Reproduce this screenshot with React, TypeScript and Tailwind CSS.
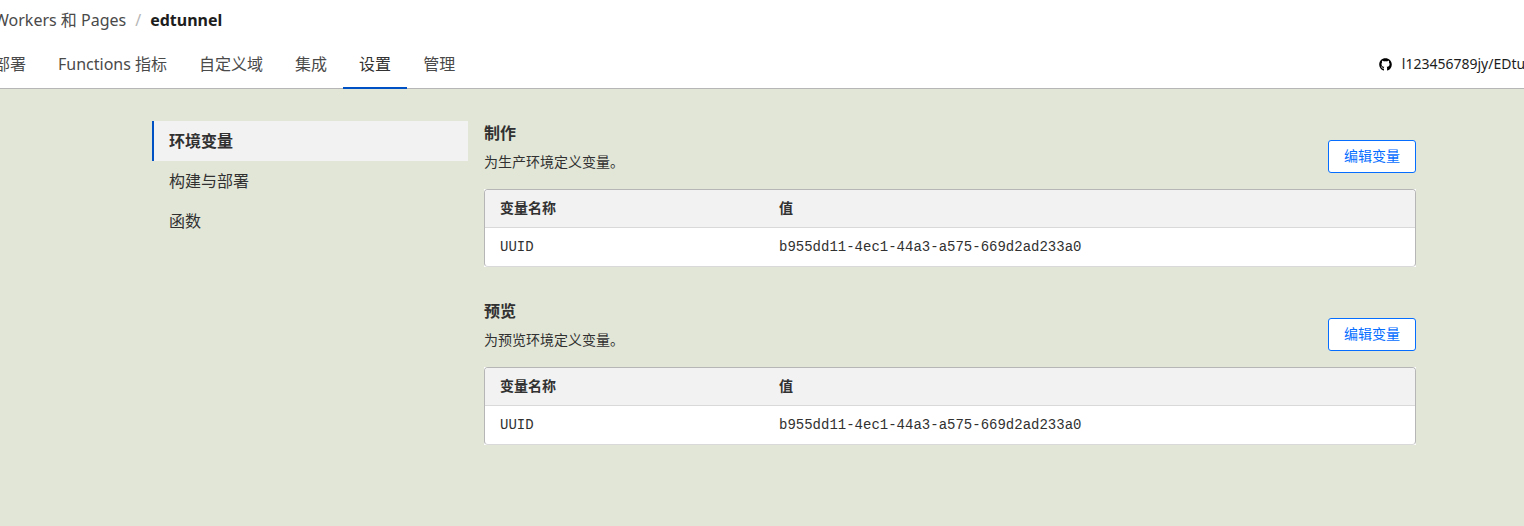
import { FaGithub } from "react-icons/fa";

type Variable = {
  name: string;
  value: string;
};

type Environment = {
  id: string;
  title: string;
  description: string;
  variables: Variable[];
};

const tabs = [
  { id: "deployments", label: "部署" },
  { id: "metrics", label: "Functions 指标" },
  { id: "domains", label: "自定义域" },
  { id: "integrations", label: "集成" },
  { id: "settings", label: "设置" },
  { id: "manage", label: "管理" },
];

const sections = [
  { id: "env", label: "环境变量" },
  { id: "builds", label: "构建与部署" },
  { id: "functions", label: "函数" },
];

const environments: Environment[] = [
  {
    id: "production",
    title: "制作",
    description: "为生产环境定义变量。",
    variables: [{ name: "UUID", value: "b955dd11-4ec1-44a3-a575-669d2ad233a0" }],
  },
  {
    id: "preview",
    title: "预览",
    description: "为预览环境定义变量。",
    variables: [{ name: "UUID", value: "b955dd11-4ec1-44a3-a575-669d2ad233a0" }],
  },
];

function Header() {
  return (
    <header className="border-b border-[#b6b6b6] bg-white px-4">
      <nav aria-label="breadcrumb" className="flex h-10 items-center gap-[9px]">
        <a href="#pages" className="text-[#4a4a4a]">
          Workers 和 Pages
        </a>
        <span className="text-[#b6b6b6]">/</span>
        <span className="font-bold text-[#1d1d1d]">edtunnel</span>
      </nav>
      <div className="flex items-center justify-between">
        <nav className="-mx-4 -mb-px flex">
          {tabs.map((tab) => {
            const isActive = tab.id === "settings";
            return (
              <a
                key={tab.id}
                href={`#${tab.id}`}
                aria-current={isActive ? "page" : undefined}
                className={`flex h-[49px] items-center border-b-2 px-4 whitespace-nowrap ${
                  isActive
                    ? "border-[#0051c3] text-[#313131]"
                    : "border-transparent text-[#4a4a4a]"
                }`}
              >
                {tab.label}
              </a>
            );
          })}
        </nav>
        <a
          href="#repository"
          className="mr-5 flex items-center gap-2.5 text-sm text-[#1d1d1d]"
        >
          <FaGithub size={13} className="text-black" />
          l123456789jy/EDtunnel
        </a>
      </div>
    </header>
  );
}

function Sidebar() {
  return (
    <nav className="w-1/4 shrink-0">
      {sections.map((section) => (
        <a
          key={section.id}
          href={`#${section.id}`}
          className={`flex h-10 items-center border-l-2 px-[15px] ${
            section.id === "env"
              ? "border-[#0051c3] bg-[#f2f2f2] font-bold"
              : "border-transparent"
          }`}
        >
          {section.label}
        </a>
      ))}
    </nav>
  );
}

function EnvironmentSection({ environment }: { environment: Environment }) {
  return (
    <section aria-labelledby={environment.id}>
      <div className="flex items-end justify-between">
        <div className="pb-0.5">
          <h2 id={environment.id} className="leading-6 font-bold">
            {environment.title}
          </h2>
          <p className="mt-2 text-sm leading-[18px]">
            {environment.description}
          </p>
        </div>
        <button
          type="button"
          className="h-[33px] rounded-[3px] border border-[#056dff] bg-white px-[15px] pb-0.5 text-sm text-[#056dff]"
        >
          编辑变量
        </button>
      </div>
      <div className="mt-4 bg-white">
        <div className="overflow-hidden rounded-[4px] border border-[#b6b6b6] border-b-[#d9d9d9]">
          <table className="w-full table-fixed text-left text-sm">
            <thead className="bg-[#f2f2f2]">
              <tr className="h-[37px] border-b border-[#d9d9d9]">
                <th className="w-[30%] px-[15px] font-bold">变量名称</th>
                <th className="px-[15px] font-bold">值</th>
              </tr>
            </thead>
            <tbody className="font-['Liberation_Mono','Noto_Sans_CJK_SC',monospace]">
              {environment.variables.map((variable) => (
                <tr key={variable.name} className="h-[39px]">
                  <td className="px-[15px]">{variable.name}</td>
                  <td className="px-[15px]">{variable.value}</td>
                </tr>
              ))}
            </tbody>
          </table>
        </div>
      </div>
    </section>
  );
}

export default function App() {
  return (
    <div className="min-h-screen overflow-hidden bg-[#e1e6d7] font-['Noto_Sans','Noto_Sans_CJK_SC',sans-serif] text-[#313131]">
      <div className="-mr-[66px] -ml-[22px]">
        <Header />
        <main className="mx-auto flex max-w-[1264px] pt-8 pb-16">
          <Sidebar />
          <div className="flex grow flex-col gap-8 pl-4">
            {environments.map((environment) => (
              <EnvironmentSection
                key={environment.id}
                environment={environment}
              />
            ))}
          </div>
        </main>
      </div>
    </div>
  );
}
